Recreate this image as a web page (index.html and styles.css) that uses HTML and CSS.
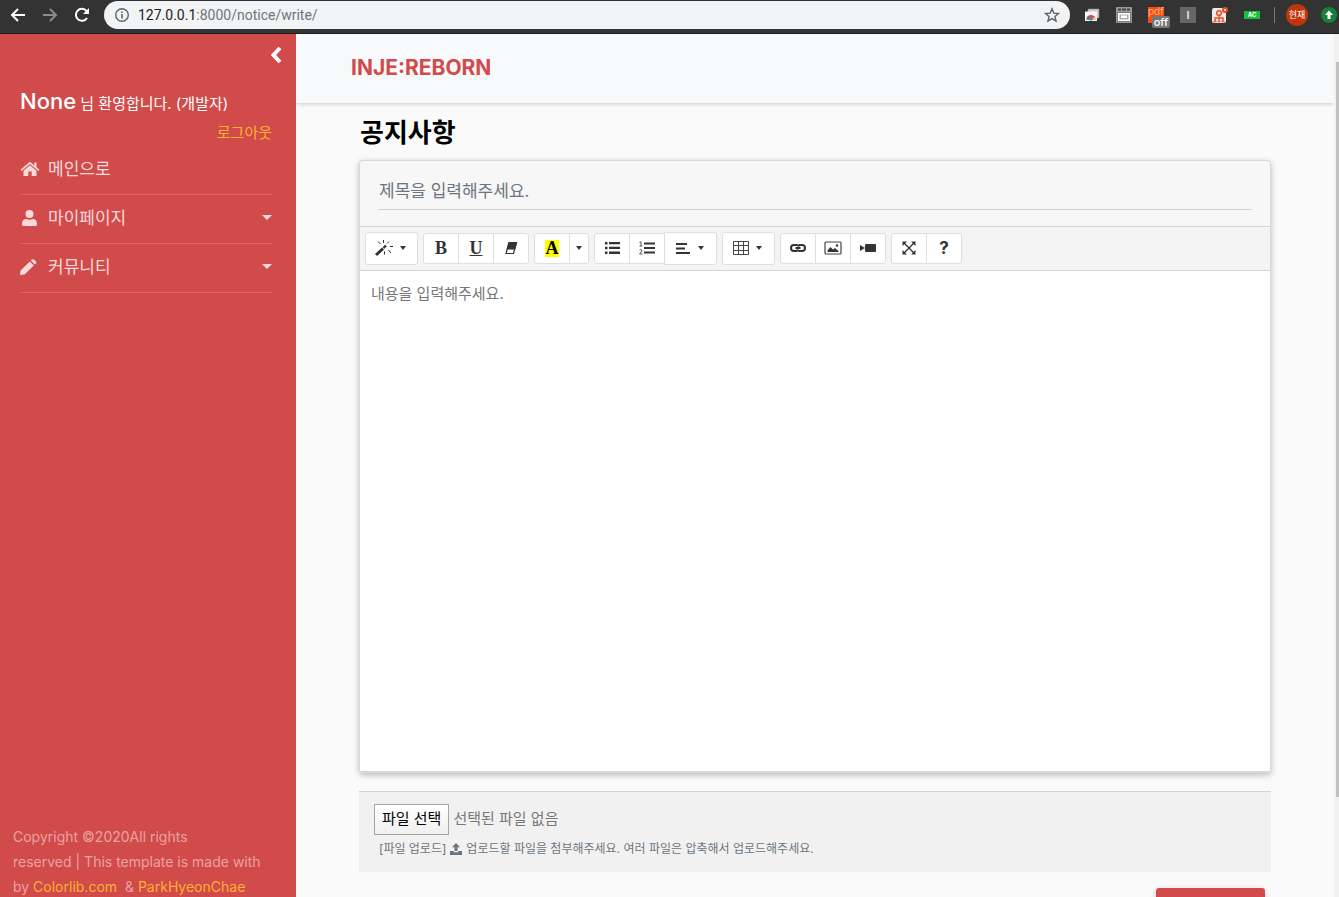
FILE: index.html
```html
<!DOCTYPE html>
<html lang="ko">
<head>
<meta charset="utf-8">
<title>INJE:REBORN</title>
<link rel="stylesheet" href="styles.css">
</head>
<body>
<header class="chrome">
  <button class="nav-btn" aria-label="Back"><svg width="16" height="16" viewBox="0 0 16 16" fill="none" stroke="#fff" stroke-width="2"><path d="M15 8H2M8 2L2 8l6 6"/></svg></button>
  <button class="nav-btn" aria-label="Forward"><svg width="16" height="16" viewBox="0 0 16 16" fill="none" stroke="#8b8b8b" stroke-width="2"><path d="M1 8h13M8 2l6 6-6 6"/></svg></button>
  <button class="nav-btn" aria-label="Reload"><svg width="16" height="16" viewBox="0 0 16 16"><path d="M13 11A6 6 0 1 1 12.500 4" fill="none" stroke="#fff" stroke-width="2"/><path d="M15 1v6H9z" fill="#fff"/></svg></button>
  <div class="address">
    <svg width="16" height="16" viewBox="0 0 16 16"><circle cx="8" cy="8" r="6.300" fill="none" stroke="#5f6368" stroke-width="1.400"/><path d="M7.200 7h1.600v4.500H7.200zM7.200 4.400h1.600V6H7.200z" fill="#5f6368"/></svg>
    <span class="url"><span class="host">127.0.0.1</span>:8000/notice/write/</span>
    <button class="star" aria-label="Bookmark"><svg width="16" height="16" viewBox="0 0 16 16"><path d="M8 1.800l1.800 4.300 4.700.4-3.600 3 1.100 4.600L8 11.600l-4 2.500 1.100-4.600-3.600-3 4.700-.4z" fill="none" stroke="#5f6368" stroke-width="1.400"/></svg></button>
  </div>
  <div class="extensions">
    <svg width="16" height="16" viewBox="0 0 16 16"><path d="M4 2h11v9H4z" fill="#ccc" stroke="#888" stroke-width=".6"/><path d="M1 4.500h12V14H1z" fill="#f5f5f5"/><path d="M2.500 12.500a4.500 4.500 0 0 1 9 0z" fill="#db4437"/><path d="M2.500 12.500a4.500 4.500 0 0 1 1.200-3L7 13z" fill="#0f9d58"/><path d="M9 10.500h2.300v2H8z" fill="#ffcd40"/><circle cx="7" cy="12" r="1.800" fill="#4285f4"/></svg>
    <svg width="16" height="16" viewBox="0 0 16 16"><rect width="16" height="16" rx="1" fill="#999"/><path d="M2 1.500h3v2H2zM6 1.500h4v2H6zM11 1.500h3v2h-3z" fill="#444"/><path d="M1 5h14v10H1z" fill="#777"/><path d="M2.700 6.700h10.600v6.600H2.700z" fill="#aaa" stroke="#fff" stroke-width="1.400"/><path d="M5 8.500h6V11H5z" fill="#fff"/></svg>
    <span class="pdf"><span class="pdf-name">pdf</span><span class="pdf-badge">off</span></span>
    <span class="tile">I</span>
    <svg width="16" height="16" viewBox="0 0 16 16"><rect y="1" width="14" height="15" rx="2" fill="#f4e8e2"/><circle cx="7" cy="6" r="2.300" fill="none" stroke="#e8552f" stroke-width="1.600"/><path d="M7 8.500v5M3 14v-3h8v3M1.500 14.500h3M5.500 14.500h3M9.500 14.500h3" fill="none" stroke="#e8552f" stroke-width="1.500"/><circle cx="13" cy="3" r="3" fill="#e34b2c"/><circle cx="13" cy="3" r="1" fill="#fff"/></svg>
    <span class="ac">AC</span>
  </div>
  <span class="divider"></span>
  <span class="avatar">현재</span>
  <svg class="update" width="16" height="16" viewBox="0 0 16 16"><circle cx="8" cy="8" r="8" fill="#188038"/><path d="M8 3.500L12 8H9.500v4h-3V8H4z" fill="#fff"/></svg>
</header>

<div class="page">
  <aside class="sidebar">
    <button class="collapse" aria-label="메뉴 닫기"><svg width="12" height="18" viewBox="0 0 12 18"><path d="M10 2L3.500 9l6.500 7" fill="none" stroke="#fff" stroke-width="4"/></svg></button>
    <div class="side-body">
      <p class="welcome"><span class="user">None</span> 님 환영합니다. (개발자)</p>
      <a class="logout" href="#">로그아웃</a>
      <nav class="menu">
        <a href="#"><svg width="20" height="16" viewBox="0 0 20 16" fill="currentColor"><path d="M10 4.300L3.500 9.700V15h4.800v-4.500h3.400V15h4.800V9.700z"/><path d="M10 .800L.500 8.700l1.100 1.200L10 3l8.400 6.900 1.100-1.200-3-2.500V1.500h-2.200v2.900z"/></svg><span>메인으로</span></a>
        <a href="#"><svg width="20" height="16" viewBox="0 0 20 16" fill="currentColor"><circle cx="9.500" cy="4" r="4"/><path d="M2 13.500C2 10.500 4 9 6 9c2 1 5 1 7 0 2 0 4 1.500 4 4.500V14.500Q17 16 15.500 16h-12Q2 16 2 14.500z"/></svg><span>마이페이지</span><svg class="caret" width="10" height="5" viewBox="0 0 10 5" fill="currentColor"><path d="M0 0h10L5 5z"/></svg></a>
        <a href="#"><svg width="20" height="16" viewBox="0 0 20 16" fill="currentColor"><path d="M0 16l.6-4.500L9.800 2.500l4 4L4.500 15.400zM10.800 1.600L12 .600q1-.9 2.200.1l1.700 1.800q1 1.100 0 2.100l-1.100 1z"/></svg><span>커뮤니티</span><svg class="caret" width="10" height="5" viewBox="0 0 10 5" fill="currentColor"><path d="M0 0h10L5 5z"/></svg></a>
      </nav>
    </div>
    <p class="copyright">Copyright ©2020All rights<br>reserved | This template is made with<br>by <a href="#">Colorlib.com</a> &nbsp;&amp; <a href="#">ParkHyeonChae</a></p>
  </aside>

  <main class="main">
    <div class="topbar"><a href="#">INJE:REBORN</a></div>
    <form class="content">
      <h1>공지사항</h1>
      <section class="card">
        <div class="title-row"><input type="text" aria-label="제목" placeholder="제목을 입력해주세요."></div>
        <div class="toolbar">
          <div class="group">
            <button type="button" class="drop" aria-label="Style"><svg width="18" height="18" viewBox="0 0 18 18" stroke="#333" fill="none"><path d="M1 16L8 9.500" stroke-width="3"/><path d="M8.500 9l2.500-2.500" stroke-width="2.400"/><path d="M8.500 1v3M3 2.500l2.500 2.500M14 2.500l-2 2M15 7.500h3M13.500 11l2.500 3M9.500 12.500v3" stroke-width="1"/></svg><span class="tri"></span></button>
          </div>
          <div class="group">
            <button type="button" class="letter">B</button>
            <button type="button" class="letter under">U</button>
            <button type="button" aria-label="Clear"><svg width="14" height="14" viewBox="0 0 14 14"><path d="M5 1.500h7.500L9.500 12.500H2z" fill="#fff" stroke="#333" stroke-width="1.200"/><path d="M4.500 1h8.700l-2 7.500H2.500z" fill="#333"/></svg></button>
          </div>
          <div class="group">
            <button type="button" class="letter"><span class="mark">A</span></button>
            <button type="button" class="narrow" aria-label="More colors"><span class="tri"></span></button>
          </div>
          <div class="group">
            <button type="button" aria-label="Unordered list"><svg width="16" height="14" viewBox="0 0 16 14" fill="#333"><path d="M1 1h2.500v2.500H1zM1 5.800h2.500v2.500H1zM1 10.500h2.500V13H1zM5 1h11v2.300H5zM5 5.800h11v2.300H5zM5 10.600h11v2.300H5z"/></svg></button>
            <button type="button" aria-label="Ordered list"><svg width="16" height="14" viewBox="0 0 16 14"><path d="M5 1.500h11v2H5zM5 6h11v2H5zM5 10.500h11v2H5z" fill="#333"/><path d="M.500 1.500L2 .800V5M.500 5h3M.600 9q1.200-1 2.200 0 .5 1-.8 2L.600 13h2.900" fill="none" stroke="#555" stroke-width="1"/></svg></button>
            <button type="button" class="drop" aria-label="Paragraph"><svg width="16" height="14" viewBox="0 0 16 14" fill="#333"><path d="M1 2h11v2H1zM1 6.500h9v2H1zM1 11h14v2H1z"/></svg><span class="tri"></span></button>
          </div>
          <div class="group">
            <button type="button" class="drop" aria-label="Table"><svg width="16" height="14" viewBox="0 0 16 14" fill="none" stroke="#444"><path d="M.500.500h15v13H.500zM.500 4.500h15M.500 9.500h15M5.500.500v13M10.500.500v13"/></svg><span class="tri"></span></button>
          </div>
          <div class="group">
            <button type="button" aria-label="Link"><svg width="18" height="12" viewBox="0 0 18 12" fill="none" stroke="#333" stroke-width="2"><path d="M8 9H5a3 3 0 0 1 0-6h2.500q2 0 2.500 1.500M10 3h3a3 3 0 0 1 0 6h-2.500Q8.500 9 8 7.500M6.500 6h5"/></svg></button>
            <button type="button" aria-label="Picture"><svg width="18" height="14" viewBox="0 0 18 14"><rect x="1" y="1" width="16" height="12" rx="1" fill="#fff" stroke="#444" stroke-width="1.200"/><path d="M3.500 11V9.500L6.500 6l2.500 2.500L11 7l3.500 3V11z" fill="#333"/><circle cx="13" cy="4.500" r="1.200" fill="#333"/></svg></button>
            <button type="button" aria-label="Video"><svg width="16" height="10" viewBox="0 0 16 10" fill="#333"><rect x="5" y="1" width="11" height="8" rx="1"/><path d="M0 2l5 3-5 3z"/></svg></button>
          </div>
          <div class="group">
            <button type="button" aria-label="Full screen"><svg width="14" height="14" viewBox="0 0 14 14"><path d="M2 2l10 10M12 2L2 12" stroke="#333" stroke-width="1.400"/><path d="M.500.500h4.500l-4.500 4.500zM13.500.500v4.500L9 .500zM.500 13.500V9L5 13.500zM13.500 13.500H9L13.500 9z" fill="#333"/></svg></button>
            <button type="button" class="help">?</button>
          </div>
        </div>
        <textarea class="editor" aria-label="내용" placeholder="내용을 입력해주세요."></textarea>
      </section>
      <section class="upload">
        <div class="file-row"><input class="file-input" type="file" id="attachment"><label class="file-button" for="attachment">파일 선택</label><span>선택된 파일 없음</span></div>
        <p class="hint"><span>[파일 업로드]</span><svg width="12" height="12" viewBox="0 0 12 12" fill="#6c757d"><path d="M6 0l4 4.300H7.500V8h-3V4.300H2z"/><path d="M0 8h3.700v1.200h4.600V8H12v4H0z"/></svg><span>업로드할 파일을 첨부해주세요. 여러 파일은 압축해서 업로드해주세요.</span></p>
      </section>
      <button class="submit" type="submit" aria-label="등록"></button>
    </form>
  </main>
  <div class="scroll"><div class="thumb"></div></div>
</div>
</body>
</html>
```
FILE: styles.css
```css
* { box-sizing: border-box; }
body {
  margin: 0;
  height: 100vh;
  overflow: hidden;
  display: flex;
  flex-direction: column;
  background: #fafafa;
  font-family: Inter, "Noto Sans CJK KR", sans-serif;
}
button { margin: 0; padding: 0; border: 0; background: none; font: inherit; }
a { color: inherit; text-decoration: none; }
p, h1 { margin: 0; }
svg { display: block; flex: none; }

.chrome {
  flex: none;
  height: 34px;
  padding: 0 2px 4px 10px;
  display: flex;
  align-items: center;
  background: #333;
  border-bottom: 1px solid #1f1f1f;
}
.nav-btn { margin-right: 16px; }
.address {
  flex: 1;
  height: 28px;
  margin: 0 14px 0 -2px;
  padding: 0 10px;
  display: flex;
  align-items: center;
  gap: 8px;
  border-radius: 14px;
  background: #f1f3f4;
}
.url { flex: 1; font: 14px/20px Roboto, sans-serif; color: #70757a; }
.host { color: #202124; }
.extensions { display: flex; gap: 16px; align-items: center; }
.pdf { position: relative; width: 16px; height: 16px; background: #ff4b0a; }
.pdf-name { display: block; font: 10px/8px Inter, sans-serif; color: #ffb08a; }
.pdf-badge {
  position: absolute;
  left: 4px;
  top: 9px;
  width: 18px;
  border-radius: 2px;
  background: #777;
  color: #fff;
  font: 500 11px/12px Inter, sans-serif;
  text-align: center;
}
.tile { width: 16px; height: 16px; background: #666; color: #ddd; font: bold 11px/16px Inter, sans-serif; text-align: center; }
.ac { width: 16px; height: 8px; background: #15c039; color: #fff; font: bold 6px/8px Inter, sans-serif; text-align: center; }
.divider { width: 1px; height: 16px; margin: 0 11px 0 14px; background: #777; }
.avatar {
  width: 22px;
  height: 22px;
  margin-right: 13px;
  border-radius: 50%;
  background: #bf360c;
  color: #fff;
  font: 9px/22px "Noto Sans CJK KR", sans-serif;
  text-align: center;
}

.page { flex: 1; min-height: 0; display: flex; }

.sidebar {
  flex: none;
  width: 296px;
  display: flex;
  flex-direction: column;
  background: #d24b4b;
  color: #fff;
}
.collapse { align-self: flex-end; margin: 12px 14px 0 0; }
.side-body { flex: 1; padding: 20px 24px 0 20px; display: flex; flex-direction: column; }
.welcome { font-size: 15px; line-height: 34px; white-space: nowrap; }
.user { font-size: 22px; font-weight: 500; }
.logout { align-self: flex-end; font-size: 15px; line-height: 24px; color: #f8b133; }
.menu a {
  display: flex;
  align-items: center;
  gap: 8px;
  height: 49px;
  padding-bottom: 3px;
  border-bottom: 1px solid #da6464;
  color: #f6dada;
  font-size: 17px;
  line-height: 24px;
}
.menu { padding-top: 1px; }
.caret { margin-left: auto; }
.copyright { padding: 0 20px 0 13px; font-size: 14px; line-height: 25px; color: #e9a2a2; height: 73px; white-space: nowrap; }
.copyright a { color: #f8b133; }

.main { flex: 1; min-width: 0; overflow: hidden; }
.topbar {
  height: 69px;
  padding: 0 55px 2px;
  display: flex;
  align-items: center;
  background: #f8f9fb;
  box-shadow: 0 1px 4px rgba(0, 0, 0, .2);
  color: #d24b4b;
  font-size: 21px;
  font-weight: 700;
}
.content { padding: 11px 63px 0; display: flex; flex-direction: column; }
h1 { padding-left: 1px; font-size: 26px; line-height: 38px; color: #000; }
.card {
  margin-top: 8px;
  border: 1px solid #d8d8d8;
  border-bottom-width: 2px;
  border-radius: 4px;
  background: #f7f7f7;
  box-shadow: 0 2px 6px rgba(0, 0, 0, .25);
}
.title-row { height: 66px; padding: 10px 18px 16px; border-bottom: 1px solid #d5d5d5; }
.title-row input {
  width: 100%;
  height: 39px;
  padding: 0 1px 2px;
  border: 0;
  border-bottom: 1px solid #ced4da;
  background: none;
  font: 17px/34px "Noto Sans CJK KR", sans-serif;
}
::placeholder { color: #6c757d; opacity: 1; }
.toolbar {
  height: 44px;
  padding: 0 5px;
  display: flex;
  align-items: center;
  gap: 5px;
  background: #f4f4f4;
  border-bottom: 1px solid #d5d5d5;
}
.group { display: flex; align-items: center; }
.group button {
  width: 36px;
  height: 31px;
  padding-bottom: 1px;
  display: flex;
  align-items: center;
  justify-content: center;
  border: 1px solid #dae0e5;
  background: #fff;
  color: #333;
}
.group button + button { margin-left: -1px; }
.group button:first-child { border-radius: 3px 0 0 3px; }
.group button:last-child { border-radius: 0 3px 3px 0; }
.group button:only-child { border-radius: 3px; }
.group .drop { width: 53px; height: 33px; padding-right: 2px; gap: 7px; }
.group .narrow { width: 20px; }
.group .letter { font: bold 18px/20px "Liberation Serif", serif; }
.under { text-decoration: underline; }
.mark { width: 14px; height: 17px; line-height: 17px; background: #ff0; color: #000; }
.group .help { font-size: 17px; font-weight: 700; }
.tri { border: 3px solid transparent; border-top: 4px solid #333; border-bottom: 0; }
.editor {
  display: block;
  width: 100%;
  height: 500px;
  padding: 10px 11px;
  border: 0;
  resize: none;
  background: #fff;
  font: 15px/24px "Noto Sans CJK KR", sans-serif;
}
.editor::placeholder { color: #777; }
.upload {
  margin-top: 18px;
  padding: 12px 15px 13px;
  border-top: 1px solid #d3d3d3;
  background: #f1f1f1;
}
.file-row { position: relative; display: flex; align-items: center; gap: 4px; font-size: 15px; line-height: 27px; color: #777; }
.file-row span { padding-bottom: 2px; }
.file-input { position: absolute; width: 1px; height: 1px; opacity: 0; }
.file-button {
  padding: 0 7px 2px;
  border: 1px solid #a5a5a5;
  background: linear-gradient(#fff, #f0f0f0);
  color: #000;
}
.hint { margin-top: 4px; padding-left: 5px; display: flex; align-items: center; gap: 4px; font-size: 12px; line-height: 20px; color: #6c757d; }
.submit {
  align-self: flex-end;
  width: 109px;
  height: 38px;
  margin: 16px 6px 0 0;
  border-radius: 3px;
  background: #d24b4b;
  box-shadow: 0 2px 6px rgba(0, 0, 0, .2);
}
.scroll { flex: none; width: 5px; padding: 28px 0 100px 2px; background: #f1f1f1; }
.thumb { height: 100%; background: #c1c1c1; }
```
